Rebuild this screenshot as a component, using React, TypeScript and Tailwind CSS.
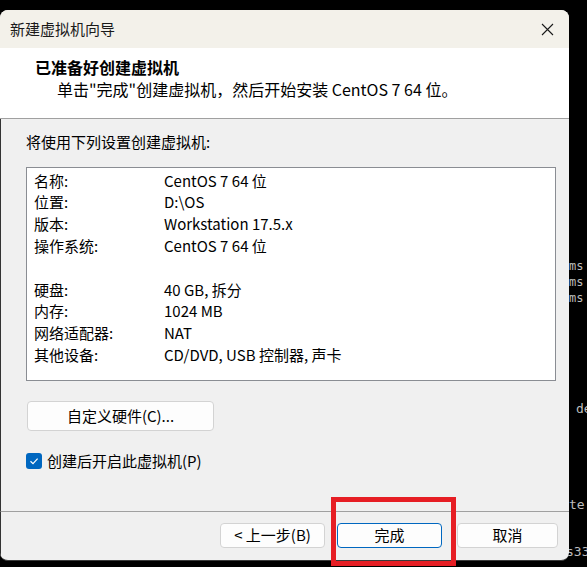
import React from "react";

const rows: [string, string][] = [
  ["名称:", "CentOS 7 64 位"],
  ["位置:", "D:\\OS"],
  ["版本:", "Workstation 17.5.x"],
  ["操作系统:", "CentOS 7 64 位"],
  ["", ""],
  ["硬盘:", "40 GB, 拆分"],
  ["内存:", "1024 MB"],
  ["网络适配器:", "NAT"],
  ["其他设备:", "CD/DVD, USB 控制器, 声卡"],
];

const font = "font-['Microsoft_YaHei_UI','Noto_Sans_CJK_SC',sans-serif]";

export default function App() {
  return (
    <div className={`relative w-[587px] h-[567px] bg-black overflow-hidden ${font}`}>
      {/* terminal text behind */}
      <div className="absolute left-[569px] top-[258px] font-['DejaVu_Sans_Mono',monospace] text-[12px] leading-[16px] text-[#bdbdbd]">
        <div>ms</div>
        <div>ms</div>
        <div>ms</div>
      </div>
      <div className="absolute left-[576px] top-[401px] font-['DejaVu_Sans_Mono',monospace] text-[13px] leading-[16px] text-[#bdbdbd]">de</div>
      <div className="absolute left-[569px] top-[497px] font-['DejaVu_Sans_Mono',monospace] text-[13px] leading-[16px] text-[#bdbdbd]">te</div>
      <div className="absolute left-[566px] top-[544px] font-['DejaVu_Sans_Mono',monospace] text-[13px] leading-[16px] text-[#bdbdbd]">s33</div>

      <div className="relative mt-[10px] w-[569px] h-[551px] flex flex-col rounded-[8px] overflow-hidden bg-[#f0f0f0] border-b-[1px] border-[#3a3a3a]">
        {/* title bar */}
        <div className="h-[38px] bg-[#f3f1ea] flex items-center justify-between pl-[10px] pr-[14px] text-[15px] text-[#1a1a1a]">
          <span>新建虚拟机向导</span>
          <svg width="13" height="13" viewBox="0 0 13 13" className="mr-[1px]">
            <path d="M1 1 L12 12 M12 1 L1 12" stroke="#1a1a1a" strokeWidth="1.1" />
          </svg>
        </div>
        {/* header */}
        <div className="h-[71px] bg-white border-b border-[#a0a0a0] flex flex-col pt-[8px]">
          <div className="pl-[35px] text-[16px] font-bold leading-[22px] text-black">已准备好创建虚拟机</div>
          <div className="pl-[57px] text-[16px] leading-[22px] text-black">
            单击"完成"创建虚拟机，然后开始安装 CentOS 7 64 位。
          </div>
        </div>
        {/* body */}
        <div className="flex-1 flex flex-col pl-[25px] pr-[14px] pt-[12px] border-l border-[#333]">
          <div className="text-[15px] leading-[22px] text-black">将使用下列设置创建虚拟机:</div>
          <div className="mt-[14px] w-[530px] h-[214px] bg-white border border-[#8a8d93] pt-[2px] pl-[7px]">
            {rows.map(([k, v], i) => (
              <div key={i} className="flex h-[21.8px] items-center text-[15px] text-black">
                <span className="w-[130px]">{k}</span>
                <span>{v}</span>
              </div>
            ))}
          </div>
          <button className="mt-[20px] ml-[1px] w-[187px] h-[30px] bg-[#fdfdfd] border border-[#d3d3d3] rounded-[4px] text-[15px] text-black flex items-center justify-center">
            自定义硬件(C)...
          </button>
          <div className="mt-[22px] flex items-center gap-[5px]">
            <div className="w-[16px] h-[16px] rounded-[3px] bg-[#0067c0] flex items-center justify-center">
              <svg width="10" height="10" viewBox="0 0 10 10">
                <path d="M1.5 5.2 L4 7.6 L8.6 2.6" stroke="white" strokeWidth="1.2" fill="none" />
              </svg>
            </div>
            <span className="text-[15px] leading-[16px] text-black">创建后开启此虚拟机(P)</span>
          </div>
        </div>
        {/* footer */}
        <div className="h-[49px] border-t border-[#a0a0a0] border-l border-l-[#333] flex items-start pt-[11px] pl-[219px] text-[15px] text-black">
          <button className="w-[105px] h-[25px] bg-[#fdfdfd] border border-[#d3d3d3] rounded-[4px] flex items-center justify-center">
            &lt; 上一步(B)
          </button>
          <button className="ml-[12px] w-[105px] h-[25px] bg-[#fdfdfd] border border-[#0067c0] rounded-[4px] flex items-center justify-center">
            完成
          </button>
          <button className="ml-[15px] w-[101px] h-[25px] bg-[#fdfdfd] border border-[#d3d3d3] rounded-[4px] flex items-center justify-center">
            取消
          </button>
        </div>
      </div>

      {/* red annotation */}
      <div className="absolute left-[331px] top-[497px] w-[125px] h-[69px] border-[5px] border-[#e61e24]" />
    </div>
  );
}
